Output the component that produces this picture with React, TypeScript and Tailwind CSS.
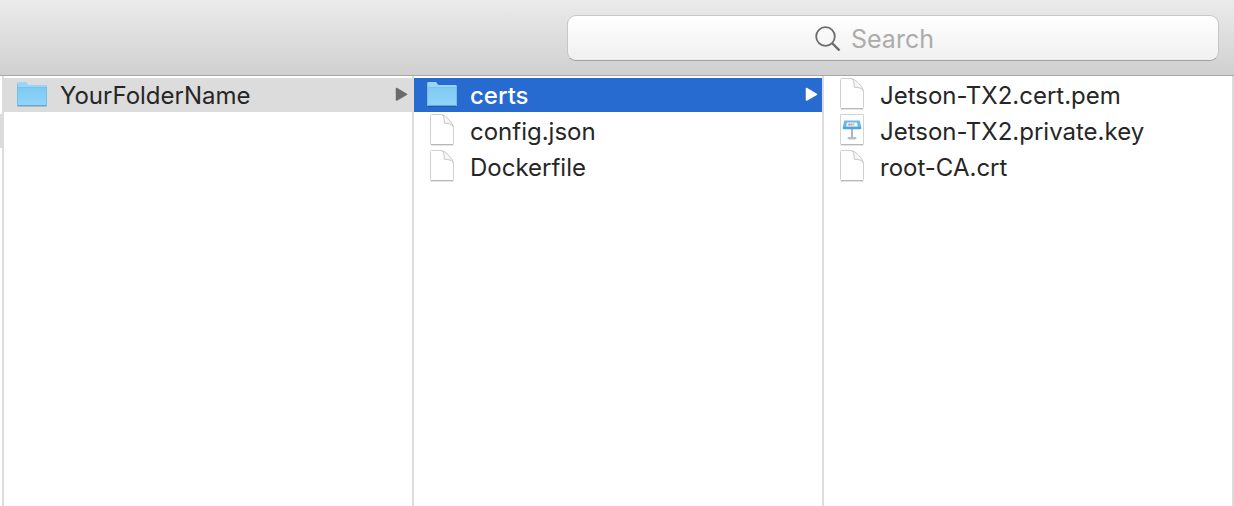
import { useState } from 'react';
import clsx from 'clsx';

type Kind = 'folder' | 'file' | 'keynote';
type Item = { name: string; kind: Kind };

const columns: { label: string; items: Item[]; selected?: string }[] = [
    {
        label: 'Projects',
        items: [{ name: 'YourFolderName', kind: 'folder' }],
        selected: 'YourFolderName',
    },
    {
        label: 'YourFolderName',
        items: [
            { name: 'certs', kind: 'folder' },
            { name: 'config.json', kind: 'file' },
            { name: 'Dockerfile', kind: 'file' },
        ],
        selected: 'certs',
    },
    {
        label: 'certs',
        items: [
            { name: 'Jetson-TX2.cert.pem', kind: 'file' },
            { name: 'Jetson-TX2.private.key', kind: 'keynote' },
            { name: 'root-CA.crt', kind: 'file' },
        ],
    },
];

function FolderIcon() {
    return (
        <svg width="32" height="34" viewBox="0 0 32 34" aria-hidden="true">
            <defs>
                <linearGradient id="folder" x1="0" y1="0" x2="0" y2="1">
                    <stop offset="0" stopColor="#7ecaf3" />
                    <stop offset="1" stopColor="#91d4f9" />
                </linearGradient>
            </defs>
            <path d="M1.5 28.5h29" stroke="#000" strokeOpacity=".16" />
            <path
                d="M1 5.5A1.5 1.5 0 0 1 2.5 4H9c1 0 1.5.3 2 1.2l.5.8c.4.7.8 1 1.7 1h16.3A1.5 1.5 0 0 1 31 8.5V28H1z"
                fill="#98d5f6"
            />
            <path d="M1 9h30v18a1 1 0 0 1-1 1H2a1 1 0 0 1-1-1z" fill="url(#folder)" />
            <path d="M1.5 9.5h29" stroke="#76c3ed" />
            <path d="M1.5 27.5h29" stroke="#64a9d1" />
            <path d="M1.5 6v21M30.5 8.5V27" stroke="#6db5dd" strokeOpacity=".7" />
        </svg>
    );
}

function FileIcon() {
    return (
        <svg width="32" height="34" viewBox="0 0 32 34" aria-hidden="true">
            <path d="M4.5 31.5h23" stroke="#000" strokeOpacity=".1" />
            <path
                d="M5.5.5H15c3 0 12.500 9.500 12.500 13.500v15.500a1 1 0 0 1-1 1h-21a1 1 0 0 1-1-1v-28a1 1 0 0 1 1-1z"
                fill="#fff"
                stroke="#cfcfcf"
            />
            <path d="M5 30.5h22" stroke="#b8b8b8" />
            <path
                d="M16.5.8c1.500 2.200 1.800 5 1.800 8.400 3.700.2 7 .5 9 3.300-1-4-7.300-10.500-10.800-11.700z"
                fill="#f7f7f7"
                stroke="#c6c6c6"
                strokeLinejoin="round"
            />
        </svg>
    );
}

function KeynoteIcon() {
    return (
        <svg width="32" height="34" viewBox="0 0 32 34" aria-hidden="true">
            <path d="M4.5 31.5h23" stroke="#000" strokeOpacity=".1" />
            <rect x="4.5" y=".5" width="23" height="30" rx=".5" fill="#fff" stroke="#d4d4d4" />
            <path d="M5 30.5h22" stroke="#b8b8b8" />
            <path d="M16 15v9" stroke="#a3b1bb" strokeWidth="1.8" />
            <ellipse cx="16" cy="24.2" rx="4.6" ry="1.4" fill="#b6c0c7" />
            <path d="M9 6.5h14a1 1 0 0 1 1 .8l1.2 5.7H6.800L8 7.300a1 1 0 0 1 1-.8z" fill="#64bbef" />
            <path d="M6.800 13h18.400v1.500a.8.8 0 0 1-.8.8H7.600a.8.8 0 0 1-.8-.8z" fill="#4aa5de" />
            <path d="M11 8.500h10l.8 4H10.200z" fill="#f3f8fc" />
            <circle cx="13.3" cy="10.6" r="1.200" fill="#c98ad0" />
            <path d="M14.5 9.500h2v2h-2z" fill="#f0937a" />
            <path d="M16.5 9.500h2v2h-2z" fill="#b8d873" />
        </svg>
    );
}

const icons = { folder: FolderIcon, file: FileIcon, keynote: KeynoteIcon };

function Row({ item, selected, active }: { item: Item; selected: boolean; active: boolean }) {
    const Icon = icons[item.kind];

    return (
        <li>
            <button
                type="button"
                aria-pressed={selected}
                className={clsx(
                    'flex h-[34px] w-full items-center gap-3 pr-1 pl-3 text-left',
                    selected && active && 'bg-[#276bd1] font-medium text-white',
                    selected && !active && 'bg-[#dcdcdc]',
                )}
            >
                <span className="shrink-0">
                    <Icon />
                </span>
                <span className="min-w-0 flex-1 truncate pt-0.5">{item.name}</span>
                {item.kind === 'folder' && (
                    <svg
                        width="13"
                        height="16"
                        viewBox="0 0 13 16"
                        className={clsx('shrink-0', active ? 'text-white' : 'text-[#6b6b6b]')}
                        aria-hidden="true"
                    >
                        <path
                            d="M1.5 1.5v11.500l10-5.700z"
                            fill="currentColor"
                            stroke="currentColor"
                            strokeWidth="1.5"
                            strokeLinejoin="round"
                        />
                    </svg>
                )}
            </button>
        </li>
    );
}

export default function App() {
    const [query, setQuery] = useState('');

    return (
        <div className="flex min-h-screen flex-col bg-white font-['Inter','Liberation_Sans',sans-serif] text-[24px] leading-8 text-[#262626]">
            <header className="flex justify-end border-b border-[#a8a8a8] bg-linear-to-b from-[#ebebeb] to-[#d0d0d0] px-[15px] pt-[15px] pb-[14px]">
                <label className="flex h-[46px] w-full max-w-[652px] items-center justify-center gap-2.5 rounded-[9px] border border-[#c6c6c6] border-b-[#a0a0a0] bg-linear-to-b from-white to-[#f0f0f0]">
                    <svg
                        width="26"
                        height="26"
                        viewBox="0 0 26 26"
                        fill="none"
                        stroke="#6c6c6c"
                        strokeWidth="1.8"
                        aria-hidden="true"
                    >
                        <circle cx="10.5" cy="11.5" r="9.3" />
                        <path d="M17 18l7.5 7.5" strokeWidth="2.4" />
                    </svg>
                    <input
                        type="text"
                        aria-label="Search"
                        placeholder="Search"
                        value={query}
                        onChange={(e) => setQuery(e.target.value)}
                        className="w-[120px] bg-transparent pt-0.5 text-[25px] outline-none placeholder:text-[#acacac]"
                    />
                </label>
            </header>

            <main className="flex flex-1">
                <div className="w-0.5 pt-[38px]">
                    <div className="h-[34px] bg-[#dcdcdc]" />
                </div>
                {columns.map((column, i) => (
                    <ul
                        key={column.label}
                        aria-label={column.label}
                        className="flex min-w-0 flex-1 flex-col gap-0.5 border-l-2 border-[#dcdcdc] pt-0.5"
                    >
                        {column.items.map((item) => (
                            <Row
                                key={item.name}
                                item={item}
                                selected={item.name === column.selected}
                                active={i === 1}
                            />
                        ))}
                    </ul>
                ))}
                <div className="w-0.5 bg-[#dcdcdc]" />
            </main>
        </div>
    );
}
